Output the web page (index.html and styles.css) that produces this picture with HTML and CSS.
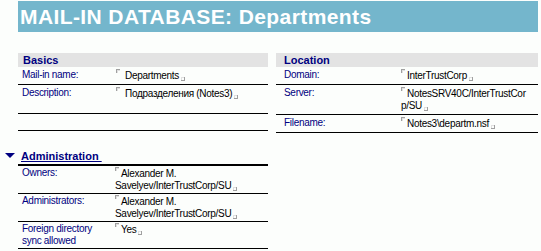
FILE: index.html
```html
<!DOCTYPE html>
<html lang="en">
<head>
  <meta charset="UTF-8">
  <title>MAIL-IN DATABASE: Departments</title>
  <link rel="stylesheet" href="styles.css">
</head>
<body>
  <div class="banner">MAIL-IN DATABASE: Departments</div>

  <div class="top-row">
    <table class="sheet basics">
      <tr><th colspan="2">Basics</th></tr>
      <tr>
        <td class="label">Mail-in name:</td>
        <td class="value"><span class="fo wide"></span>Departments<span class="fc"></span></td>
      </tr>
      <tr class="tall">
        <td class="label">Description:</td>
        <td class="value"><span class="fo wide"></span>Подразделения (Notes3)<span class="fc"></span></td>
      </tr>
      <tr class="blank">
        <td class="label"></td>
        <td class="value"></td>
      </tr>
    </table>

    <table class="sheet location">
      <tr><th colspan="2">Location</th></tr>
      <tr>
        <td class="label">Domain:</td>
        <td class="value"><span class="fo"></span>InterTrustCorp<span class="fc"></span></td>
      </tr>
      <tr>
        <td class="label">Server:</td>
        <td class="value breakall"><span class="fo"></span>NotesSRV40C/InterTrustCorp/SU<span class="fc"></span></td>
      </tr>
      <tr>
        <td class="label">Filename:</td>
        <td class="value"><span class="fo"></span>Notes3\departm.nsf<span class="fc"></span></td>
      </tr>
    </table>
  </div>

  <div class="section-head">
    <svg class="twisty" width="10" height="5" viewBox="0 0 10 5"><polygon points="0,0 10,0 5,5" fill="#000080"/></svg>
    <span class="section-title">Administration&nbsp;</span>
  </div>

  <table class="sheet admin">
    <tr>
      <td class="label">Owners:</td>
      <td class="value"><span class="fo"></span>Alexander M. Savelyev/InterTrustCorp/SU<span class="fc"></span></td>
    </tr>
    <tr>
      <td class="label">Administrators:</td>
      <td class="value"><span class="fo"></span>Alexander M. Savelyev/InterTrustCorp/SU<span class="fc"></span></td>
    </tr>
    <tr>
      <td class="label">Foreign directory sync allowed</td>
      <td class="value"><span class="fo"></span>Yes<span class="fc"></span></td>
    </tr>
  </table>
</body>
</html>
```

FILE: styles.css
```css
body {
  margin: 0;
  padding-top: 1px;
  background-color: #fcfefc;
  font-family: "Liberation Sans", Arial, sans-serif;
}
.banner {
  width: 518px;
  height: 31px;
  margin-left: 18px;
  padding-left: 2px;
  background-color: #74b6cc;
  color: #ffffff;
  font-size: 21px;
  font-weight: bold;
  letter-spacing: 0.4px;
  line-height: 31px;
}

.top-row {
  display: flex;
  align-items: flex-start;
  gap: 8px;
  margin: 21px 0 0 18px;
}

.sheet {
  border-collapse: collapse;
  font-size: 10px;
  letter-spacing: -0.3px;
  line-height: 12px;
}
.sheet th {
  height: 14px;
  padding: 0 0 0 5px;
  background-color: #e3e3e3;
  color: #000080;
  font-size: 11px;
  font-weight: bold;
  letter-spacing: 0;
  text-align: left;
  line-height: 14px;
}
.sheet td {
  padding: 2px 3px 2px 4px;
  border-bottom: 1px solid #000000;
  vertical-align: top;
}
.sheet .label { color: #000080; }
.sheet .value { color: #000000; }

.basics { width: 250px; }
.basics .label { width: 87px; }
.basics .tall td { height: 24px; }
.basics .blank td { height: 12px; }

.location { width: 262px; }
.location th { padding-left: 8px; }
.location td.label { width: 110px; padding-left: 8px; }
.sheet td.breakall {
  word-break: break-all;
  padding-right: 11px;
}

/* Notes field markers */
.fo, .fc {
  display: inline-block;
  width: 3px;
  height: 3px;
  border-color: #a0a0a0;
  border-style: solid;
  box-shadow: inset 1px 1px 0 #e0e0e0;
}
.fo {
  border-width: 1px 0 0 1px;
  margin-right: 2px;
  vertical-align: 6px;
}
.fo.wide { margin-right: 5px; }
.fc {
  border-width: 0 1px 1px 0;
  margin-left: 2px;
  vertical-align: -2px;
}

.section-head {
  display: flex;
  align-items: center;
  gap: 6px;
  margin: 16px 0 0 5px;
  height: 13px;
}
.twisty { display: block; }
.section-title {
  color: #000080;
  font-size: 11px;
  font-weight: bold;
  text-decoration: underline;
}

.admin {
  width: 250px;
  margin: 2px 0 0 18px;
  border-top: 2px solid #000000;
}
.admin td { padding: 1px 3px 1px 4px; }
.admin .label { width: 86px; }
```
